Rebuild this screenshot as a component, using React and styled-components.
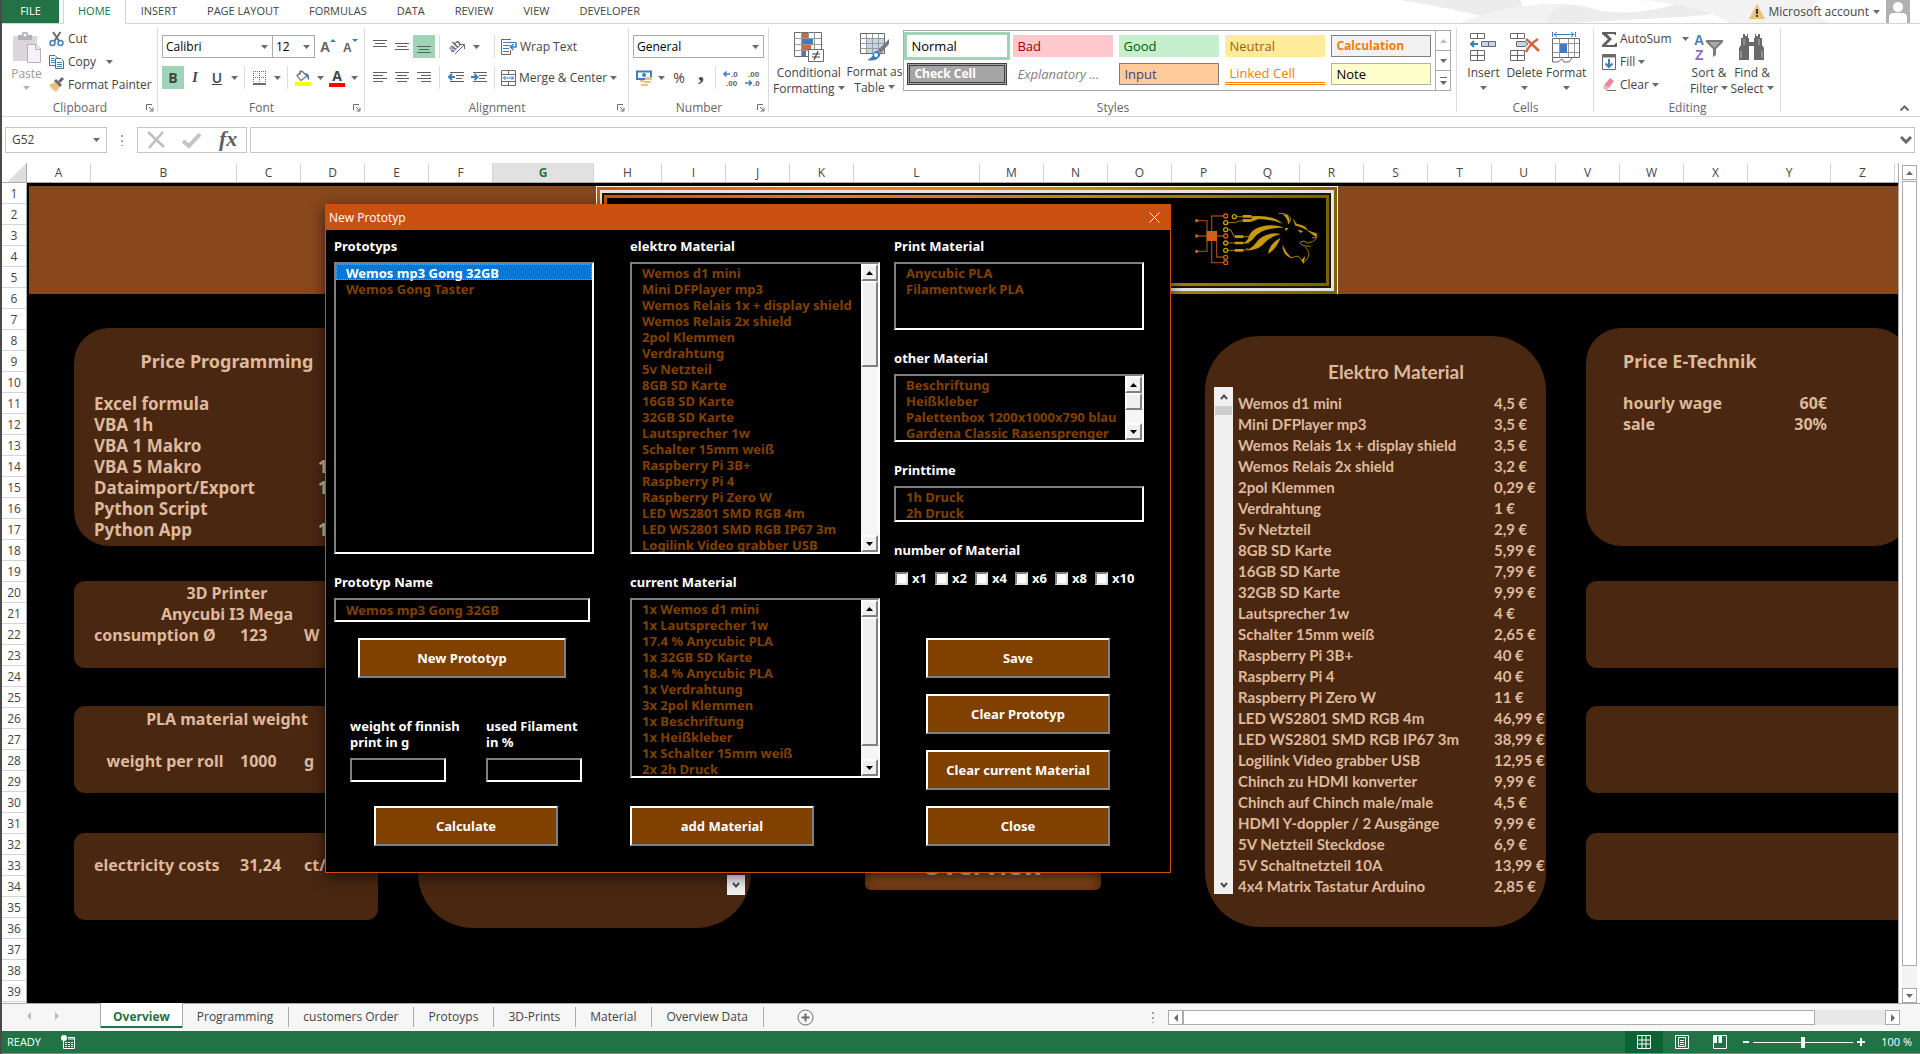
import React from "react";
import styled, { createGlobalStyle, css } from "styled-components";

const green = "#217346";
const ui = `"Open Sans", "Noto Sans", sans-serif`;
const dialogFont = `"Noto Sans", "Open Sans", sans-serif`;

const tabs = ["INSERT", "PAGE LAYOUT", "FORMULAS", "DATA", "REVIEW", "VIEW", "DEVELOPER"];

const columns = [
  ["A", 64], ["B", 146], ["C", 64], ["D", 64], ["E", 64], ["F", 64], ["G", 101],
  ["H", 68], ["I", 64], ["J", 64], ["K", 64], ["L", 126], ["M", 64], ["N", 64],
  ["O", 64], ["P", 64], ["Q", 64], ["R", 64], ["S", 64], ["T", 64], ["U", 64],
  ["V", 64], ["W", 64], ["X", 64], ["Y", 83], ["Z", 64],
];
const rows = Array.from({ length: 39 }, (_, i) => i + 1);

const cellStyles = [
  ["Normal", "normal"], ["Bad", "bad"], ["Good", "good"], ["Neutral", "neutral"], ["Calculation", "calculation"],
  ["Check Cell", "check"], ["Explanatory ...", "explanatory"], ["Input", "input"], ["Linked Cell", "linked"], ["Note", "note"],
];

const materials = [
  ["Wemos d1 mini", "4,5 €"],
  ["Mini DFPlayer mp3", "3,5 €"],
  ["Wemos Relais 1x + display shield", "3,5 €"],
  ["Wemos Relais 2x shield", "3,2 €"],
  ["2pol Klemmen", "0,29 €"],
  ["Verdrahtung", "1 €"],
  ["5v Netzteil", "2,9 €"],
  ["8GB SD Karte", "5,99 €"],
  ["16GB SD Karte", "7,99 €"],
  ["32GB SD Karte", "9,99 €"],
  ["Lautsprecher 1w", "4 €"],
  ["Schalter 15mm weiß", "2,65 €"],
  ["Raspberry Pi 3B+", "40 €"],
  ["Raspberry Pi 4", "40 €"],
  ["Raspberry Pi Zero W", "11 €"],
  ["LED WS2801 SMD RGB 4m", "46,99 €"],
  ["LED WS2801 SMD RGB IP67 3m", "38,99 €"],
  ["Logilink Video grabber USB", "12,95 €"],
  ["Chinch zu HDMI konverter", "9,99 €"],
  ["Chinch auf Chinch male/male", "4,5 €"],
  ["HDMI Y-doppler / 2 Ausgänge", "9,99 €"],
  ["5V Netzteil Steckdose", "6,9 €"],
  ["5V Schaltnetzteil 10A", "13,99 €"],
  ["4x4 Matrix Tastatur Arduino", "2,85 €"],
];

const programming = [
  ["Excel formula", ""],
  ["VBA 1h", ""],
  ["VBA 1 Makro", ""],
  ["VBA 5 Makro", "1"],
  ["Dataimport/Export", "1"],
  ["Python Script", ""],
  ["Python App", "1"],
];

const currentMaterial = [
  "1x Wemos d1 mini",
  "1x Lautsprecher 1w",
  "17.4 % Anycubic PLA",
  "1x 32GB SD Karte",
  "18.4 % Anycubic PLA",
  "1x Verdrahtung",
  "3x 2pol Klemmen",
  "1x Beschriftung",
  "1x Heißkleber",
  "1x Schalter 15mm weiß",
  "2x 2h Druck",
];

const sheets = ["Programming", "customers Order", "Protoyps", "3D-Prints", "Material", "Overview Data"];

/* ---------- icons ---------- */

const Caret = ({ color = "#6a6a6a" }) => (
  <svg viewBox="0 0 7 4" width="7" height="4" aria-hidden="true">
    <path d="M0 0H7L3.500 4Z" fill={color} />
  </svg>
);

const Launcher = () => (
  <svg width="8" height="8" viewBox="0 0 8 8" fill="none" stroke="#6a6a6a">
    <path d="M.5 6V.5H6M3 3L6.500 6.500M7 3.500V7H3.500" />
  </svg>
);

const PasteIcon = () => (
  <svg width="30" height="32" viewBox="0 0 30 32">
    <path d="M1 4H25V29H1Z" fill="#dcd6dc" />
    <path d="M6 3H10V1Q10 0 13 0T16 1V3H20V8H6Z" fill="#b4b0b4" />
    <circle cx="13" cy="3" r="1.500" fill="#fff" />
    <path d="M15.500 12.500H24L28.500 17V30.500H15.500Z" fill="#f6f1f8" stroke="#b4b0b4" />
    <path d="M23.500 12.500V17.500H28.500" fill="none" stroke="#b4b0b4" />
  </svg>
);

const CutIcon = () => (
  <svg width="16" height="16" viewBox="0 0 16 16" fill="none">
    <path d="M4 1L10.500 10.500M11.500 1L5 10.500" stroke="#6a6a6a" strokeWidth="2" />
    <circle cx="3.500" cy="12" r="2.500" stroke="#4a80b8" strokeWidth="1.500" />
    <circle cx="11.500" cy="12" r="2.500" stroke="#4a80b8" strokeWidth="1.500" />
  </svg>
);

const CopyIcon = () => (
  <svg width="16" height="16" viewBox="0 0 16 16" fill="#fff" stroke="#6a6a6a">
    <path d="M.5 1.500H6L8.500 4V11.500H.5Z" />
    <path d="M2 4.500H5M2 6.500H6M2 8.500H6" stroke="#4a80b8" />
    <path d="M6.500 4.500H12L14.500 7V14.500H6.500Z" />
    <path d="M8 8.500H13M8 10.500H13M8 12.500H13" stroke="#4a80b8" />
  </svg>
);

const PainterIcon = () => (
  <svg width="16" height="16" viewBox="0 0 16 16">
    <path d="M0 8L6 5L11 10L7 15Q3 13 0 8Z" fill="#ecc17c" />
    <path d="M5 4L7 2L13 8L11 10Z" fill="#6a6a6a" />
    <path d="M10 5L14 1" stroke="#6a6a6a" strokeWidth="3" />
  </svg>
);

const lineIcon = (lines) => () => (
  <svg width="14" height="13" viewBox="0 0 14 13" stroke="#5f5f5f">
    {lines.map(([x1, x2, y]) => (
      <path key={y} d={`M${x1} ${y}.500H${x2}`} />
    ))}
  </svg>
);
const TopAlign = lineIcon([[0, 14, 0], [2, 12, 3], [0, 14, 6]]);
const MiddleAlign = lineIcon([[0, 14, 3], [2, 12, 6], [0, 14, 9]]);
const BottomAlign = lineIcon([[0, 14, 6], [2, 12, 9], [0, 14, 12]]);
const LeftAlign = lineIcon([[0, 14, 1], [0, 10, 4], [0, 14, 7], [0, 10, 10]]);
const CenterAlign = lineIcon([[0, 14, 1], [2, 12, 4], [0, 14, 7], [2, 12, 10]]);
const RightAlign = lineIcon([[0, 14, 1], [4, 14, 4], [0, 14, 7], [4, 14, 10]]);

const IndentIcon = ({ flip }) => (
  <svg width="16" height="13" viewBox="0 0 16 13" fill="none" stroke="#5f5f5f">
    <path d="M2 1.500H16M8 4.500H16M8 7.500H14M2 10.500H16" />
    <path d={flip ? "M0 6H6M3.500 3L6.500 6L3.500 9" : "M1 6H7M4 3L1 6L4 9"} stroke="#3f7cba" strokeWidth="2" />
  </svg>
);

const OrientationIcon = () => (
  <svg width="20" height="20" viewBox="0 0 20 20" fill="none" stroke="#6a6a6a">
    <text x="1" y="13" transform="rotate(-45 7 9)" fontFamily="Liberation Sans" fontSize="11" fontWeight="700" fill="#6a6a6a" stroke="none">ab</text>
    <path d="M8 17L17 8M13 7.500H17.500V12" />
  </svg>
);

const WrapIcon = () => (
  <svg width="16" height="16" viewBox="0 0 16 16" fill="none" stroke="#6a6a6a">
    <path d="M0.500 0V15.500H9.500V11M0 .5H10" />
    <path d="M2 3.500H14M2 6.500H9M2 9.500H8M2 12.500H8" stroke="#3f7cba" />
    <path d="M15 3V8H10M12.500 5L9.500 8L12.500 11" stroke="#3f7cba" strokeWidth="1.500" />
  </svg>
);

const MergeIcon = () => (
  <svg width="15" height="16" viewBox="0 0 15 16" fill="none" stroke="#6a6a6a">
    <path d="M.5 .5H14.500V15.500H.5ZM.5 4.500H14.500M.5 11.500H14.500M7.500 0V4M7.500 12V16" />
    <path d="M2 8H13M4.500 6L2.500 8L4.500 10M10.500 6L12.500 8L10.500 10" stroke="#3f7cba" />
  </svg>
);

const BorderIcon = () => (
  <svg width="14" height="14" viewBox="0 0 14 14" fill="none" stroke="#6a6a6a">
    <path d="M.5 0V12M12.500 0V12M6.500 0V12M0 .5H13M0 6.500H13" strokeDasharray="1 1" />
    <path d="M0 13H13" strokeWidth="2" />
  </svg>
);

const FillIcon = () => (
  <svg width="18" height="17" viewBox="0 0 18 17">
    <path d="M6 1.500V6M3 6.500L8 2L13 7L7 11.500Z" fill="#fff" stroke="#6a6a6a" strokeWidth="1.200" />
    <path d="M11 4Q16 4 15 11Q13 10 13 7Z" fill="#3f7cba" />
    <path d="M1 13H17V17H1Z" fill="#ffff00" />
  </svg>
);

const GrowIcon = ({ small }) => (
  <svg width="17" height="20" viewBox="0 0 17 20">
    <text x="0" y="15" fontFamily="Liberation Sans" fontWeight="700" fontSize={small ? 12 : 14} fill="#5f5f5f">A</text>
    <path d={small ? "M9 2H15L12 5Z" : "M10 5H16L13 2Z"} fill="#3f7cba" />
  </svg>
);

const MoneyIcon = () => (
  <svg width="17" height="18" viewBox="0 0 17 18">
    <path d="M1 2.500H15V10H1Z" fill="#fff" stroke="#3f7cba" strokeWidth="2" />
    <circle cx="8" cy="6" r="2" fill="#3f7cba" />
    <path d="M9 8H16V11H9ZM8 12H15V14H8ZM4 11H8V13H4ZM5 15H12V17H5Z" fill="#ecc17c" />
  </svg>
);

const DecimalIcon = ({ flip }) => (
  <svg width="18" height="20" viewBox="0 0 18 20" fontFamily="Liberation Sans" fontSize="8" fontWeight="700" fill="#5f5f5f">
    <text x={flip ? 4 : 9} y="9">{flip ? ".00" : ".0"}</text>
    <text x={flip ? 9 : 4} y="18">{flip ? ".0" : ".00"}</text>
    <path d={flip ? "M1 15H7M5 12.500L7.500 15L5 17.500" : "M2 6H8M4.500 3.500L2 6L4.500 8.500"} fill="none" stroke="#3f7cba" strokeWidth="1.500" />
  </svg>
);

const ConditionalIcon = () => (
  <svg width="30" height="31" viewBox="0 0 30 31">
    <path d="M.5 .5H27.500V24.500H.5Z" fill="#fff" stroke="#6a6a6a" />
    <path d="M.5 6.500H27M.5 12.500H27M.5 18.500H27M7.500 0V24M14.500 0V24M20.500 0V24" stroke="#9a9a9a" />
    <path d="M8 1H14V6H8ZM8 13H17V18H8Z" fill="#d9613c" />
    <path d="M8 7H19V12H8ZM8 19H12V24H8Z" fill="#3f7cba" />
    <path d="M14.500 17.500H29.500V29.500H14.500Z" fill="#fff" stroke="#6a6a6a" />
    <path d="M18 22H26M18 25H26M24 19L20 28" stroke="#444" strokeWidth="1.200" />
  </svg>
);

const TableIcon = () => (
  <svg width="30" height="30" viewBox="0 0 30 30">
    <path d="M.5 1.500H24.500V21.500H.5Z" fill="#fff" stroke="#6a6a6a" />
    <path d="M7 7H24V21H7Z" fill="#c2d5ea" />
    <path d="M.5 6.500H24M.5 11.500H24M.5 16.500H24M6.500 2V21M12.500 2V21M18.500 2V21" stroke="#9a9a9a" />
    <path d="M29 7V12L21 21L18 18Z" fill="#7a7a7a" />
    <path d="M18 19Q21 21 20 24Q16 30 7 28Q12 26 13 22Q15 18 18 19Z" fill="#3f7cba" />
    <circle cx="16" cy="23" r="2" fill="#fff" />
  </svg>
);

const InsertIcon = () => (
  <svg width="27" height="31" viewBox="0 0 27 31" fill="#fff" stroke="#6a6a6a">
    <path d="M.5 1.500H14.500V6.500H.5ZM7.500 1.500V6.500M.5 18.500H14.500V28.500H.5ZM7.500 18.500V28.500M.5 23.500H14.500" />
    <path d="M11.500 9.500H25.500V14.500H11.500ZM18.500 9.500V14.500" fill="#c2d5ea" />
    <path d="M8 12H1M4 9L1 12L4 15" fill="none" stroke="#3f7cba" strokeWidth="2" />
  </svg>
);

const DeleteIcon = () => (
  <svg width="30" height="31" viewBox="0 0 30 31" fill="#fff" stroke="#6a6a6a">
    <path d="M.5 1.500H14.500V6.500H.5ZM7.500 1.500V6.500M.5 18.500H14.500V28.500H.5ZM7.500 18.500V28.500M.5 23.500H14.500" />
    <path d="M6.500 9.500H15L18 12L15 14.500H6.500Z" fill="#c2d5ea" />
    <path d="M16 7Q22 12 29 19M28 7Q20 12 16 20" fill="none" stroke="#d9613c" strokeWidth="2.500" />
  </svg>
);

const FormatIcon = () => (
  <svg width="29" height="31" viewBox="0 0 29 31" fill="#fff" stroke="#6a6a6a">
    <path d="M.5 0V5M23.500 0V5M2 2.500H22M5 0L2 2.500L5 5M19 0L22 2.500L19 5" fill="none" stroke="#3f7cba" />
    <path d="M.5 6.500H27.500V25.500H.5Z" />
    <path d="M.5 11.500H27M.5 20.500H27M7.500 7V25M16.500 7V25M22.500 7V25" stroke="#9a9a9a" />
    <path d="M8 12H15V21H8Z" fill="#3f7cba" stroke="none" />
    <path d="M.5 26V30H6L10 27L12 30H17L20 26" />
  </svg>
);

const SumIcon = () => (
  <svg width="15" height="15" viewBox="0 0 15 15">
    <path d="M0 0H14V3H13L12 2H5L10 7L4 13H12L14 11H15V15H0V13L6 7L0 2Z" fill="#5f5f5f" />
  </svg>
);

const FillDownIcon = () => (
  <svg width="15" height="16" viewBox="0 0 15 16" fill="none" stroke="#6a6a6a">
    <path d="M.5 .5H13.500V15.500H.5Z" fill="#fff" />
    <path d="M1 2H13" strokeWidth="3" />
    <path d="M7 5V13M3.500 9.500L7 13L10.500 9.500" stroke="#3f7cba" strokeWidth="2" />
  </svg>
);

const ClearIcon = () => (
  <svg width="15" height="14" viewBox="0 0 15 14">
    <path d="M8 0L12 3L7 10L2 7Z" fill="#e8889c" />
    <path d="M2 7L7 10L5 12H3L1 10Z" fill="#f3b6c1" />
    <path d="M5 12.500H14" stroke="#6a6a6a" />
  </svg>
);

const SortIcon = () => (
  <svg width="30" height="31" viewBox="0 0 30 31" fontFamily="Liberation Sans" fontSize="14" fontWeight="700">
    <text x="0" y="13" fill="#4a80b8">A</text>
    <text x="1" y="28" fill="#9467bd">Z</text>
    <path d="M12 8H29V10L22 17V23L19 25V17L12 10Z" fill="#7a7a7a" />
    <path d="M15 10H26L20.500 16Z" fill="#a8a8a8" />
  </svg>
);

const FindIcon = () => (
  <svg width="28" height="31" viewBox="0 0 28 31" fill="#6a6a6a">
    <path d="M5 2H7V4H9V2H10V6H11V10H16V6H17V2H18V4H20V2H22V6H24V13L26 16V28H16V14H11V28H1V16L3 13V6H5Z" />
    <path d="M6 7V13M21 7V13M3 19V26M24 19V26" stroke="#b8b8b8" />
  </svg>
);

const Lion = () => (
  <svg width="125" height="53" viewBox="42 75 375 159" fill="none">
    <g stroke="#8a4314" strokeWidth="4">
      <path d="M50 101H81V193H50M50 147H81M95 133V87H130M111 147H130M110 160V210H130M95 160V227H130" />
    </g>
    <g fill="#d06018">
      <path d="M80 132H111V162H80Z" />
      <circle cx="50" cy="101" r="5" />
      <circle cx="50" cy="147" r="5" />
      <circle cx="50" cy="193" r="5" />
    </g>
    <g stroke="#d06018" strokeWidth="4">
      <circle cx="137" cy="87" r="6" />
      <circle cx="137" cy="147" r="6" />
      <circle cx="137" cy="211" r="6" />
      <circle cx="137" cy="227" r="6" />
    </g>
    <g stroke="#c79a0a" strokeWidth="4">
      <circle cx="163" cy="89" r="6" />
      <circle cx="137" cy="107" r="6" />
      <circle cx="137" cy="128" r="6" />
      <circle cx="137" cy="168" r="6" />
      <circle cx="137" cy="190" r="6" />
    </g>
    <g stroke="#a67f08" strokeWidth="3">
      <path d="M170 89H188M144 107H166L176 102H188M144 128H152L162 149M144 168H164M144 190H164M190 149H208M190 168H208M190 190L205 184" />
      <path d="M340 97L346 110Q360 115 376 120L384 132L410 140V152L400 164M410 152L396 152M358 166L372 162L382 168L398 164M360 168Q364 178 392 178M376 180Q392 196 384 212L370 229M366 220L354 207L334 212M296 79Q322 78 331 92Q334 104 324 112" />
    </g>
    <g fill="#c79a0a">
      <path d="M188 84H214V92H188ZM188 96H214V105H188ZM164 145H190V153H164ZM164 164H190V172H164ZM164 186H190V194H164Z" />
      <path d="M214 88Q276 82 308 110Q270 96 236 96L214 104Z" />
      <path d="M206 150C214 122 262 104 312 122C270 122 242 130 224 150Q210 170 190 169Q204 160 206 150Z" />
      <path d="M196 190C222 184 226 164 246 150Q272 134 302 141C276 148 262 158 250 172Q230 192 196 190Z" />
      <path d="M302 152Q268 170 264 200Q286 190 302 152Z" />
      <path d="M306 82Q324 92 324 112Q334 98 322 84Z" />
      <path d="M308 172C306 194 318 210 338 214C320 200 314 188 308 172Z" />
      <path d="M340 97L350 112Q372 112 382 130Q362 118 346 116Z" />
      <path d="M352 128L370 132L362 138ZM314 124L326 122L318 132ZM384 132L410 140L408 150L396 142Z" />
      <path d="M364 220L376 206L370 231Z" />
    </g>
  </svg>
);

/* ---------- page ---------- */

const BigCommand = ({ icon, label, second, muted }) => (
  <BigButton $muted={muted}>
    {icon}
    <span>{label}</span>
    <span>
      {second} <Caret color={muted ? "#b4b4b4" : undefined} />
    </span>
  </BigButton>
);

const Group = ({ label, width, launcher, children }) => (
  <GroupBox $width={width}>
    {children}
    <GroupLabel>
      {label}
      {launcher && (
        <LauncherButton aria-label={`${label} settings`}>
          <Launcher />
        </LauncherButton>
      )}
    </GroupLabel>
  </GroupBox>
);

const ListBox = ({ id, label, items, height, selected, scroll }) => (
  <Field>
    <FieldLabel htmlFor={id}>{label}</FieldLabel>
    <ListFrame $height={height}>
      <List id={id} size={Math.max(2, items.length)} defaultValue={selected}>
        {items.map((item) => (
          <option key={item}>{item}</option>
        ))}
      </List>
      {scroll && (
        <ClassicScroll>
          <ClassicButton type="button" aria-label="Scroll up">
            <svg width="7" height="4" viewBox="0 0 7 4"><path d="M0 4H7L3.500 0Z" /></svg>
          </ClassicButton>
          <ClassicThumb $height={scroll} />
          <ClassicTrack />
          <ClassicButton type="button" aria-label="Scroll down">
            <svg width="7" height="4" viewBox="0 0 7 4"><path d="M0 0H7L3.500 4Z" /></svg>
          </ClassicButton>
        </ClassicScroll>
      )}
    </ListFrame>
  </Field>
);

const PrototypDialog = () => (
  <Dialog role="dialog" aria-label="New Prototyp">
    <TitleBar>
      New Prototyp
      <CloseButton aria-label="Close window">
        <svg width="11" height="11" viewBox="0 0 11 11" stroke="#fff"><path d="M.5 .5L10.500 10.500M10.500 .5L.5 10.500" /></svg>
      </CloseButton>
    </TitleBar>
    <DialogBody>
      <DialogColumn $width={260}>
        <ListBox id="prototyps" label="Prototyps" height={292} selected="Wemos mp3 Gong 32GB" items={["Wemos mp3 Gong 32GB", "Wemos Gong Taster"]} />
        <Field>
          <FieldLabel htmlFor="name">Prototyp Name</FieldLabel>
          <TextInput id="name" $width={256} defaultValue="Wemos mp3 Gong 32GB" />
        </Field>
        <FormButton $width={208} $left={24} $top={16}>New Prototyp</FormButton>
        <InputPair>
          <Field>
            <FieldLabel htmlFor="weight">weight of finnish<br />print in g</FieldLabel>
            <TextInput id="weight" $width={96} />
          </Field>
          <Field>
            <FieldLabel htmlFor="filament">used Filament<br />in %</FieldLabel>
            <TextInput id="filament" $width={96} />
          </Field>
        </InputPair>
        <FormButton $left={40} $top={24}>Calculate</FormButton>
      </DialogColumn>
      <DialogColumn $width={250} $left={36}>
        <ListBox id="elektro" label="elektro Material" height={292} scroll={86} items={materials.slice(0, 18).map((m) => m[0])} />
        <ListBox id="current" label="current Material" height={180} scroll={129} items={currentMaterial} />
        <FormButton $top={28}>add Material</FormButton>
      </DialogColumn>
      <DialogColumn $width={250} $left={14}>
        <ListBox id="print" label="Print Material" height={68} items={["Anycubic PLA", "Filamentwerk PLA"]} />
        <ListBox id="other" label="other Material" height={68} scroll={17} items={["Beschriftung", "Heißkleber", "Palettenbox 1200x1000x790 blau", "Gardena Classic Rasensprenger"]} />
        <ListBox id="time" label="Printtime" height={36} items={["1h Druck", "2h Druck"]} />
        <Field as="fieldset">
          <FieldLabel as="legend">number of Material</FieldLabel>
          <Checks>
            {["x1", "x2", "x4", "x6", "x8", "x10"].map((n) => (
              <CheckLabel key={n}>
                <Check type="checkbox" />
                {n}
              </CheckLabel>
            ))}
          </Checks>
        </Field>
        <FormButton $left={32} $top={52}>Save</FormButton>
        <FormButton $left={32} $top={16}>Clear Prototyp</FormButton>
        <FormButton $left={32} $top={16}>Clear current Material</FormButton>
        <FormButton $left={32} $top={16}>Close</FormButton>
      </DialogColumn>
    </DialogBody>
  </Dialog>
);

const Ribbon = () => (
  <RibbonBar>
    <Group label="Clipboard" width={156} launcher>
      <GroupContent>
        <BigCommand muted label="Paste" icon={<PasteIcon />} />
        <CommandStack>
          <Command><CutIcon /> Cut</Command>
          <Command><CopyIcon /> Copy <Spacer /><Caret /></Command>
          <Command><PainterIcon /> Format Painter</Command>
        </CommandStack>
      </GroupContent>
    </Group>
    <Group label="Font" width={207} launcher>
      <ToolRows>
        <ToolRow>
          <Combo $width={111}><select aria-label="Font"><option>Calibri</option></select><Caret /></Combo>
          <Combo $width={43} $joined><select aria-label="Font size"><option>12</option></select><Caret /></Combo>
          <Tool $width={26}><GrowIcon /></Tool>
          <Tool $width={20}><GrowIcon small /></Tool>
        </ToolRow>
        <ToolRow>
          <Tool $active><b>B</b></Tool>
          <Tool><em>I</em></Tool>
          <Tool><u>U</u></Tool>
          <Tool $width={12}><Caret /></Tool>
          <Divider />
          <Tool><BorderIcon /></Tool>
          <Tool $width={12}><Caret /></Tool>
          <Divider />
          <Tool><FillIcon /></Tool>
          <Tool $width={12}><Caret /></Tool>
          <Tool><FontColor>A</FontColor></Tool>
          <Tool $width={12}><Caret /></Tool>
        </ToolRow>
      </ToolRows>
    </Group>
    <Group label="Alignment" width={264} launcher>
      <ToolRows>
        <ToolRow>
          <Tool><TopAlign /></Tool>
          <Tool><MiddleAlign /></Tool>
          <Tool $active><BottomAlign /></Tool>
          <Divider />
          <Tool $width={26}><OrientationIcon /></Tool>
          <Tool $width={12}><Caret /></Tool>
          <Spacer $width={8} />
          <Divider />
          <Command><WrapIcon /> Wrap Text</Command>
        </ToolRow>
        <ToolRow>
          <Tool><LeftAlign /></Tool>
          <Tool><CenterAlign /></Tool>
          <Tool><RightAlign /></Tool>
          <Divider />
          <Tool $width={23}><IndentIcon /></Tool>
          <Tool $width={23}><IndentIcon flip /></Tool>
          <Divider />
          <Command><MergeIcon /> Merge &amp; Center <Caret /></Command>
        </ToolRow>
      </ToolRows>
    </Group>
    <Group label="Number" width={140} launcher>
      <ToolRows>
        <ToolRow>
          <Combo $width={131}><select aria-label="Number format"><option>General</option></select><Caret /></Combo>
        </ToolRow>
        <ToolRow>
          <Tool><MoneyIcon /></Tool>
          <Tool $width={12}><Caret /></Tool>
          <Tool $width={24}>%</Tool>
          <Tool $width={20}><Comma>,</Comma></Tool>
          <Divider />
          <Tool><DecimalIcon /></Tool>
          <Tool><DecimalIcon flip /></Tool>
        </ToolRow>
      </ToolRows>
    </Group>
    <Group label="Styles" width={688}>
      <GroupContent $left={3}>
        <BigCommand label="Conditional" second="Formatting" icon={<ConditionalIcon />} />
        <BigCommand label="Format as" second="Table" icon={<TableIcon />} />
        <Gallery>
          <GalleryGrid>
            {cellStyles.map(([name, kind]) => (
              <StyleCell key={kind} $kind={kind}>{name}</StyleCell>
            ))}
          </GalleryGrid>
          <GalleryScroll>
            <button aria-label="Previous row"><svg width="7" height="4" viewBox="0 0 7 4"><path d="M0 4H7L3.500 0Z" fill="#c0c0c0" /></svg></button>
            <button aria-label="Next row"><Caret /></button>
            <button aria-label="More styles"><svg width="7" height="8" viewBox="0 0 7 8"><path d="M0 0H7V1H0ZM0 4H7L3.500 8Z" fill="#6a6a6a" /></svg></button>
          </GalleryScroll>
        </Gallery>
      </GroupContent>
    </Group>
    <Group label="Cells" width={137}>
      <GroupContent $left={6}>
        <BigCommand label="Insert" icon={<InsertIcon />} />
        <BigCommand label="Delete" icon={<DeleteIcon />} />
        <BigCommand label="Format" icon={<FormatIcon />} />
      </GroupContent>
    </Group>
    <Group label="Editing" width={187}>
      <GroupContent $left={6}>
        <CommandStack>
          <Command><SumIcon /> AutoSum <Spacer /><Caret /></Command>
          <Command><FillDownIcon /> Fill <Caret /></Command>
          <Command><ClearIcon /> Clear <Caret /></Command>
        </CommandStack>
        <BigCommand label="Sort &amp;" second="Filter" icon={<SortIcon />} />
        <BigCommand label="Find &amp;" second="Select" icon={<FindIcon />} />
      </GroupContent>
    </Group>
    <CollapseButton aria-label="Collapse the ribbon">
      <svg width="9" height="6" viewBox="0 0 9 6" fill="none" stroke="#6a6a6a" strokeWidth="2"><path d="M.5 5.500L4.500 1.500L8.500 5.500" /></svg>
    </CollapseButton>
  </RibbonBar>
);

const App = () => (
  <Window>
    <GlobalStyle />
    <TabBar>
      <FileTab>FILE</FileTab>
      <RibbonTab $active>HOME</RibbonTab>
      {tabs.map((tab) => (
        <RibbonTab key={tab}>{tab}</RibbonTab>
      ))}
      <Account>
        <Swirls viewBox="0 0 520 23" preserveAspectRatio="none" aria-hidden="true">
          <path d="M0 0H120Q130 16 100 20Q50 8 0 0ZM90 23Q150 -4 190 8Q230 20 290 0H360Q330 16 260 18Q190 22 170 23Z" fill="#ececec" />
          <path d="M60 23Q110 2 170 4Q140 14 150 23ZM240 0H420Q400 10 430 23H330Q300 4 240 0Z" fill="#f2f2f2" />
        </Swirls>
        <AccountButton>
          <svg width="16" height="15" viewBox="0 0 16 15">
            <path d="M8 0L16 15H0Z" fill="#ecc17c" />
            <path d="M8 5V10M8 11V13" stroke="#3a3a3a" strokeWidth="2" />
          </svg>
          Microsoft account <Caret />
        </AccountButton>
        <svg width="24" height="23" viewBox="0 0 24 23">
          <path d="M0 0H24V23H0Z" fill="#b1b1b1" />
          <path d="M3 23V17Q3 13 8 13H16Q21 13 21 17V23Z" fill="#fff" />
          <circle cx="12" cy="7" r="5.500" fill="#fff" stroke="#b1b1b1" />
        </svg>
      </Account>
    </TabBar>
    <Ribbon />
    <FormulaBar>
      <NameBox>
        <input aria-label="Name box" defaultValue="G52" />
        <Caret />
      </NameBox>
      <Dots />
      <FormulaTools>
        <button aria-label="Cancel"><svg width="18" height="18" viewBox="0 0 18 18" stroke="#bdbdbd" strokeWidth="2.500"><path d="M1 1L17 16M16 1L2 17" /></svg></button>
        <button aria-label="Enter"><svg width="20" height="17" viewBox="0 0 20 17" fill="none" stroke="#c4c4c4" strokeWidth="4"><path d="M1 9L7 14L18 2" /></svg></button>
        <button><i>fx</i></button>
      </FormulaTools>
      <FormulaInput>
        <input aria-label="Formula" />
        <svg width="12" height="8" viewBox="0 0 12 8" fill="none" stroke="#6a6a6a" strokeWidth="3"><path d="M1 1L6 6L11 1" /></svg>
      </FormulaInput>
    </FormulaBar>

    <Workbook>
      <SheetArea>
        <ColumnHeads>
          <Corner />
          {columns.map(([name, width]) => (
            <ColumnHead key={name} $width={width} $active={name === "G"}>{name}</ColumnHead>
          ))}
        </ColumnHeads>
        <SheetRow>
          <RowHeads>
            {rows.map((row) => (
              <RowHead key={row}>{row}</RowHead>
            ))}
          </RowHeads>
          <Canvas>
            <Banner>
              <LogoFrame>
                <LogoLine>
                  <LogoInner>
                    <LogoCore><Lion /></LogoCore>
                  </LogoInner>
                </LogoLine>
              </LogoFrame>
            </Banner>
            <Board>
              <PanelColumn $left={47} $top={34} $width={304}>
                <Panel $height={218} $radius={35} $pad={23} $large>
                  <PanelTitle>Price Programming</PanelTitle>
                  <PanelGap />
                  {programming.map(([name, price]) => (
                    <CostRow key={name} $wide>
                      <span>{name}</span>
                      <span>{price}</span>
                    </CostRow>
                  ))}
                </Panel>
                <Panel $height={87} $gap={35} $pad={2}>
                  <PanelTitle $small>3D Printer</PanelTitle>
                  <PanelTitle $small>Anycubi I3 Mega</PanelTitle>
                  <CostRow><span>consumption Ø</span><span>123</span><span>W</span></CostRow>
                </Panel>
                <Panel $height={87} $gap={38} $pad={3}>
                  <PanelTitle $small>PLA material weight</PanelTitle>
                  <PanelGap />
                  <CostRow $center><span>weight per roll</span><span>1000</span><span>g</span></CostRow>
                </Panel>
                <Panel $height={87} $gap={40} $pad={22}>
                  <CostRow><span>electricity costs</span><span>31,24</span><span>ct/</span></CostRow>
                </Panel>
              </PanelColumn>

              <PanelColumn $left={40} $top={42} $width={333}>
                <ListPanel $height={592} $end>
                  <DownButton aria-label="Scroll down">
                    <svg width="8" height="6" viewBox="0 0 8 6" fill="none" stroke="#505050" strokeWidth="2"><path d="M1 1L4 4.500L7 1" /></svg>
                  </DownButton>
                </ListPanel>
              </PanelColumn>

              <PanelColumn $left={114} $top={546} $width={236}>
                <OverviewButton>Overview</OverviewButton>
              </PanelColumn>

              <PanelColumn $left={104} $top={42} $width={341}>
                <ListPanel $height={591}>
                  <ListTitle>Elektro Material</ListTitle>
                  <ListBody>
                    <SheetScroll>
                      <button aria-label="Scroll up"><svg width="8" height="6" viewBox="0 0 8 6" fill="none" stroke="#505050" strokeWidth="2"><path d="M1 5L4 1.500L7 5" /></svg></button>
                      <SheetThumb />
                      <button aria-label="Scroll down"><svg width="8" height="6" viewBox="0 0 8 6" fill="none" stroke="#505050" strokeWidth="2"><path d="M1 1L4 4.500L7 1" /></svg></button>
                    </SheetScroll>
                    <MaterialTable>
                      <tbody>
                        {materials.map(([name, price]) => (
                          <tr key={name}>
                            <td>{name}</td>
                            <td>{price}</td>
                          </tr>
                        ))}
                      </tbody>
                    </MaterialTable>
                  </ListBody>
                </ListPanel>
              </PanelColumn>

              <PanelColumn $left={40} $top={34} $width={324}>
                <Panel $height={218} $radius={35} $pad={23} $inset={33}>
                  <PanelTitle $start>Price E-Technik</PanelTitle>
                  <PanelGap />
                  <WageRow><span>hourly wage</span><span>60€</span></WageRow>
                  <WageRow><span>sale</span><span>30%</span></WageRow>
                </Panel>
                <Panel $height={87} $gap={35} />
                <Panel $height={87} $gap={38} />
                <Panel $height={87} $gap={40} />
              </PanelColumn>
            </Board>
          </Canvas>
        </SheetRow>
      </SheetArea>
      <VerticalScroll>
        <button aria-label="Scroll up"><svg width="7" height="4" viewBox="0 0 7 4"><path d="M0 4H7L3.500 0Z" fill="#6a6a6a" /></svg></button>
        <VerticalThumb />
        <button aria-label="Scroll down"><Caret /></button>
      </VerticalScroll>
    </Workbook>

    <SheetTabs>
      <TabArrows>
        <svg width="4" height="8" viewBox="0 0 4 8"><path d="M4 0V8L0 4Z" fill="#bcbcbc" /></svg>
        <svg width="4" height="8" viewBox="0 0 4 8"><path d="M0 0V8L4 4Z" fill="#bcbcbc" /></svg>
      </TabArrows>
      <SheetTab $active>Overview</SheetTab>
      {sheets.map((sheet) => (
        <SheetTab key={sheet}>{sheet}</SheetTab>
      ))}
      <AddSheet aria-label="New sheet">
        <svg width="17" height="17" viewBox="0 0 17 17" fill="none" stroke="#6a6a6a">
          <circle cx="8.500" cy="8.500" r="7.500" />
          <path d="M8.500 4.500V12.500M4.500 8.500H12.500" strokeWidth="2" />
        </svg>
      </AddSheet>
      <HorizontalScroll>
        <Dots />
        <button aria-label="Scroll left"><svg width="4" height="8" viewBox="0 0 4 8"><path d="M4 0V8L0 4Z" fill="#6a6a6a" /></svg></button>
        <HorizontalThumb />
        <HorizontalTrack />
        <button aria-label="Scroll right"><svg width="4" height="8" viewBox="0 0 4 8"><path d="M0 0V8L4 4Z" fill="#6a6a6a" /></svg></button>
      </HorizontalScroll>
    </SheetTabs>

    <StatusBar>
      READY
      <svg width="15" height="14" viewBox="0 0 15 14" fill="none" stroke="#fff">
        <circle cx="3" cy="3" r="3" fill="#fff" stroke="none" />
        <path d="M2.500 6V13.500H13.500V2.500H7M7 4H13" />
        <path d="M4 7.500H12M4 9.500H12M4 11.500H12" strokeDasharray="2 1" />
      </svg>
      <StatusTools>
        <ViewButton $active aria-label="Normal view">
          <svg width="14" height="14" viewBox="0 0 14 14" fill="none" stroke="#fff"><path d="M.5 .5H13.500V13.500H.5ZM.5 5H13.500M.5 9H13.500M5 .5V13.500M9 .5V13.500" /></svg>
        </ViewButton>
        <ViewButton aria-label="Page layout view">
          <svg width="14" height="14" viewBox="0 0 14 14" fill="none" stroke="#fff"><path d="M.5 .5H13.500V13.500H.5ZM3.500 2.500H10.500V11.500H3.500ZM5 5.500H9M5 7.500H9M5 9.500H9" /></svg>
        </ViewButton>
        <ViewButton aria-label="Page break view">
          <svg width="14" height="14" viewBox="0 0 14 14" fill="none" stroke="#fff"><path d="M.5 .5H13.500V13.500H.5Z" /><path d="M1 1H4V8H1ZM5.500 1H9V8H5.500Z" fill="#fff" stroke="none" /></svg>
        </ViewButton>
        <ZoomButton aria-label="Zoom out"><svg width="6" height="8" viewBox="0 0 6 8"><path d="M0 3H6V5H0Z" fill="#fff" /></svg></ZoomButton>
        <ZoomSlider type="range" aria-label="Zoom" min="0" max="200" defaultValue="100" />
        <ZoomButton aria-label="Zoom in"><svg width="8" height="8" viewBox="0 0 8 8"><path d="M3 0H5V3H8V5H5V8H3V5H0V3H3Z" fill="#fff" /></svg></ZoomButton>
        <ZoomValue>100 %</ZoomValue>
      </StatusTools>
    </StatusBar>
    <PrototypDialog />
  </Window>
);

const GlobalStyle = createGlobalStyle`
  * {
    box-sizing: border-box;
  }
  body {
    margin: 0;
    background: #fff;
  }
  button, input, select {
    margin: 0;
    padding: 0;
    border: 0;
    background: none;
    color: inherit;
    font: inherit;
    appearance: none;
    outline: none;
  }
  svg {
    display: block;
    flex: none;
  }
`;

const Window = styled.main`
  position: relative;
  display: flex;
  flex-direction: column;
  height: 100vh;
  min-height: 960px;
  overflow: hidden;
  border-left: 2px solid #4a4a4a;
  background: #fff;
  color: #444;
  font-family: ${ui};
  font-size: 12px;
  line-height: 16px;
`;
const Spacer = styled.span`
  width: ${({ $width }) => $width || 4}px;
`;

const TabBar = styled.nav`
  display: flex;
  flex: none;
  height: 24px;
  border-bottom: 1px solid #d4d4d4;
`;
const RibbonTab = styled.button`
  height: 24px;
  padding: 0 14px 2px;
  border: solid transparent;
  border-width: 0 1px;
  font-size: 11px;
  white-space: nowrap;
  ${({ $active }) =>
    $active &&
    css`
      border-color: #d4d4d4;
      background: #fff;
      color: ${green};
    `}
`;
const FileTab = styled(RibbonTab)`
  width: 57px;
  height: 23px;
  margin-right: 4px;
  background: ${green};
  color: #fff;
`;
const Account = styled.div`
  position: relative;
  display: flex;
  justify-content: flex-end;
  width: 520px;
  margin-left: auto;
  padding-right: 10px;
`;
const Swirls = styled.svg`
  position: absolute;
  inset: 0;
  width: 100%;
  height: 23px;
`;
const AccountButton = styled.button`
  position: relative;
  display: flex;
  align-items: center;
  gap: 4px;
  margin-right: 6px;
`;

const RibbonBar = styled.section`
  display: flex;
  flex: none;
  height: 93px;
  border-bottom: 1px solid #d4d4d4;
`;
const GroupBox = styled.div`
  position: relative;
  display: flex;
  flex: none;
  flex-direction: column;
  justify-content: space-between;
  width: ${({ $width }) => $width}px;
  margin-top: 4px;
  background: linear-gradient(#dcdcdc, #dcdcdc) right top / 1px 84px no-repeat;
`;
const GroupLabel = styled.div`
  height: 16px;
  color: #666;
  text-align: center;
`;
const LauncherButton = styled.button`
  position: absolute;
  right: 4px;
  bottom: 4px;
  display: flex;
`;
const GroupContent = styled.div`
  display: flex;
  height: 68px;
  padding-left: ${({ $left }) => $left || 4}px;
`;
const BigButton = styled.button`
  display: flex;
  flex-direction: column;
  align-items: center;
  min-width: 41px;
  padding: 4px 1px 0;
  color: ${({ $muted }) => ($muted ? "#9a9a9a" : "#444")};
  white-space: nowrap;
  svg:first-child {
    margin-bottom: 2px;
  }
  span {
    display: flex;
    align-items: center;
    gap: 3px;
    height: 16px;
  }
`;
const CommandStack = styled.div`
  display: flex;
  flex-direction: column;
`;
const Command = styled.button`
  display: flex;
  align-items: center;
  gap: 3px;
  height: 23px;
  padding-left: 2px;
  white-space: nowrap;
`;
const ToolRows = styled.div`
  display: flex;
  flex-direction: column;
  gap: 8px;
  padding: 7px 0 0 4px;
`;
const ToolRow = styled.div`
  display: flex;
  height: 23px;
`;
const Combo = styled.label`
  display: flex;
  align-items: center;
  justify-content: space-between;
  width: ${({ $width }) => $width}px;
  margin-left: ${({ $joined }) => ($joined ? -1 : 0)}px;
  padding: 0 4px 0 3px;
  border: 1px solid #ababab;
  color: #000;
  select {
    flex: 1;
    min-width: 0;
  }
`;
const Tool = styled.button`
  display: flex;
  align-items: center;
  justify-content: center;
  width: ${({ $width }) => $width || 22}px;
  background: ${({ $active }) => ($active ? "#9fd5b7" : "none")};
  font-size: 14px;
  em {
    font-family: "Liberation Serif", serif;
    font-weight: 700;
  }
  u {
    font-weight: 600;
  }
`;
const Comma = styled.b`
  height: 28px;
  font-family: "Liberation Serif", serif;
  font-size: 24px;
`;
const FontColor = styled.span`
  width: 16px;
  height: 18px;
  border-bottom: 4px solid #f00;
  font-weight: 700;
  line-height: 14px;
`;
const Divider = styled.span`
  width: 1px;
  margin: 0 4px;
  background: #dcdcdc;
`;
const Gallery = styled.div`
  display: flex;
  width: 548px;
  height: 61px;
  margin-top: 2px;
  border: 1px solid #ababab;
`;
const GalleryGrid = styled.div`
  display: grid;
  flex: 1;
  grid-template-columns: repeat(5, 100px);
  grid-auto-rows: 22px;
  gap: 6px;
  padding: 4px 3px;
`;
const kinds = {
  normal: "color: #000; background: #fff; outline: 3px solid #9fd5b7;",
  bad: "color: #9c0006; background: #ffc7ce;",
  good: "color: #006100; background: #c6efce;",
  neutral: "color: #9c6500; background: #ffeb9c;",
  calculation: "color: #fa7d00; background: #f2f2f2; border: 1px solid #7f7f7f; font-size: 12px; font-weight: 700;",
  check: "color: #fff; background: #a5a5a5; border: 3px double #3f3f3f; font-size: 12px; font-weight: 700;",
  explanatory: "color: #7f7f7f; font-style: italic;",
  input: "color: #3f3f76; background: #ffcc99; border: 1px solid #7f7f7f;",
  linked: "color: #fa7d00; border-bottom: 3px double #ff8001;",
  note: "color: #000; background: #ffffcc; border: 1px solid #b2b2b2;",
};
const StyleCell = styled.button`
  display: flex;
  align-items: center;
  padding: 0 4px;
  font-size: 13px;
  white-space: nowrap;
  ${({ $kind }) => kinds[$kind]}
`;
const GalleryScroll = styled.div`
  display: flex;
  flex-direction: column;
  width: 15px;
  border-left: 1px solid #ababab;
  button {
    display: flex;
    flex: 1;
    align-items: center;
    justify-content: center;
  }
  button + button {
    border-top: 1px solid #ababab;
  }
`;
const CollapseButton = styled.button`
  align-self: flex-end;
  margin: 0 11px 5px auto;
`;

const FormulaBar = styled.section`
  display: flex;
  flex: none;
  height: 46px;
  padding: 10px 5px 10px 3px;
`;
const NameBox = styled.div`
  display: flex;
  align-items: center;
  width: 102px;
  padding: 0 6px;
  border: 1px solid #c6c6c6;
  input {
    flex: 1;
    min-width: 0;
  }
`;
const Dots = styled.span`
  align-self: center;
  width: 2px;
  height: 11px;
  margin: 0 14px;
  background: repeating-linear-gradient(#a0a0a0 0 2px, transparent 2px 5px);
`;
const FormulaTools = styled.div`
  display: flex;
  align-items: center;
  justify-content: space-around;
  width: 110px;
  margin-right: 3px;
  border: 1px solid #c6c6c6;
  i {
    color: #5f5f5f;
    font-family: "Liberation Serif", serif;
    font-size: 22px;
    font-weight: 700;
  }
`;
const FormulaInput = styled.div`
  display: flex;
  flex: 1;
  align-items: center;
  padding-right: 2px;
  border: 1px solid #c6c6c6;
  input {
    flex: 1;
  }
`;

const Workbook = styled.section`
  display: flex;
  flex: 1;
  min-height: 0;
`;
const SheetArea = styled.div`
  display: flex;
  flex: 1;
  flex-direction: column;
  min-width: 0;
  overflow: hidden;
  border-right: 1px solid #ababab;
`;
const ColumnHeads = styled.div`
  display: flex;
  flex: none;
  height: 20px;
  border-bottom: 1px solid #ababab;
`;
const Corner = styled.div`
  flex: none;
  width: 25px;
  border-right: 1px solid #ababab;
  background: linear-gradient(135deg, transparent 58%, #dedede 58%);
`;
const ColumnHead = styled.div`
  flex: none;
  width: ${({ $width }) => $width}px;
  padding-top: 2px;
  border-right: 1px solid #d4d4d4;
  text-align: center;
  ${({ $active }) =>
    $active &&
    css`
      background: #e1e1e1;
      color: ${green};
      font-weight: 700;
    `}
`;
const SheetRow = styled.div`
  display: flex;
  flex: 1;
  min-height: 0;
`;
const RowHeads = styled.div`
  flex: none;
  width: 25px;
  overflow: hidden;
  border-right: 1px solid #ababab;
`;
const RowHead = styled.div`
  height: 21px;
  padding-top: 3px;
  border-bottom: 1px solid #d4d4d4;
  text-align: center;
`;
const Canvas = styled.div`
  flex: 1;
  min-width: 0;
  overflow: hidden;
  background: #000;
  color: #dfb99c;
`;
const Banner = styled.div`
  height: 108px;
  margin: 3px 0 0 2px;
  padding-left: 567px;
  background: #89471c;
`;
const metal = "linear-gradient(90deg, #c55a11, #ed7d31 33%, #bf8f00 67%, #7f6000)";
const LogoFrame = styled.div`
  width: 742px;
  height: 108px;
  padding: 3px;
  border: solid #fff7e0;
  border-width: 1px 1px 0;
  background: ${metal};
`;
const LogoLine = styled.div`
  height: 100%;
  padding: 2px;
  border: 3px solid #e4e4e4;
  border-left-width: 2px;
  background: #1a1410;
`;
const LogoInner = styled.div`
  height: 100%;
  padding: 3px;
  background: ${metal};
`;
const LogoCore = styled.div`
  display: flex;
  justify-content: flex-end;
  height: 100%;
  padding: 14px 7px;
  background: #000;
`;
const Board = styled.div`
  display: flex;
  align-items: flex-start;
`;
const PanelColumn = styled.div`
  flex: none;
  width: ${({ $width }) => $width}px;
  margin: ${({ $top, $left }) => `${$top}px 0 0 ${$left}px`};
`;
const Panel = styled.section`
  height: ${({ $height }) => $height}px;
  margin-top: ${({ $gap }) => $gap || 0}px;
  padding: ${({ $pad, $inset }) => `${$pad || 0}px 14px 0 ${$inset || 16}px`};
  border-radius: ${({ $radius }) => $radius || 11}px;
  background: #492711;
  font-family: ${dialogFont};
  font-size: ${({ $large }) => ($large ? 17 : 16)}px;
  font-weight: 700;
  line-height: 21px;
`;
const PanelTitle = styled.h2`
  margin: 0;
  padding-left: ${({ $start }) => ($start ? 4 : 0)}px;
  font-size: ${({ $small }) => ($small ? 16 : 18)}px;
  font-weight: 700;
  text-align: ${({ $start }) => ($start ? "left" : "center")};
`;
const PanelGap = styled.div`
  height: 21px;
`;
const CostRow = styled.div`
  display: grid;
  grid-template-columns: ${({ $wide }) => ($wide ? "224px 1fr" : "146px 64px 1fr")};
  height: 21px;
  white-space: nowrap;
  span {
    padding-left: 4px;
  }
  span:first-child {
    text-align: ${({ $center }) => ($center ? "center" : "left")};
  }
`;
const WageRow = styled.div`
  display: flex;
  justify-content: space-between;
  width: 208px;
  padding-left: 4px;
`;
const ListPanel = styled.section`
  display: flex;
  flex-direction: column;
  align-items: ${({ $end }) => ($end ? "flex-end" : "stretch")};
  justify-content: ${({ $end }) => ($end ? "flex-end" : "flex-start")};
  height: ${({ $height }) => $height}px;
  padding: ${({ $end }) => ($end ? "0 6px 33px" : "24px 0 33px 9px")};
  border-radius: 55px;
  background: #492711;
`;
const DownButton = styled.button`
  display: flex;
  align-items: center;
  justify-content: center;
  width: 18px;
  height: 20px;
  background: #f0f0f0;
`;
const OverviewButton = styled.button`
  width: 100%;
  height: 50px;
  border-radius: 6px;
  background: #89471c;
  box-shadow: inset 0 0 12px #4a2409;
  color: #d8d8d8;
  font-family: ${dialogFont};
  font-size: 26px;
  font-weight: 700;
`;
const ListTitle = styled.h2`
  margin: 0 0 3px 32px;
  font-family: Lato, sans-serif;
  font-size: 19px;
  font-weight: 700;
  line-height: 24px;
  text-align: center;
`;
const ListBody = styled.div`
  display: flex;
  flex: 1;
`;
const SheetScroll = styled.div`
  display: flex;
  flex-direction: column;
  width: 19px;
  background: #f0f0f0;
  button {
    display: flex;
    align-items: center;
    justify-content: center;
    width: 19px;
    height: 19px;
  }
  button:last-child {
    margin-top: auto;
  }
`;
const SheetThumb = styled.div`
  height: 9px;
  margin: 0 1px;
  background: #cdcdcd;
`;
const MaterialTable = styled.table`
  align-self: flex-start;
  margin: 6px 0 -3px 5px;
  border-collapse: collapse;
  font-family: Lato, sans-serif;
  font-size: 15px;
  font-weight: 700;
  line-height: 21px;
  white-space: nowrap;
  td {
    padding: 0;
  }
  td:first-child {
    width: 256px;
  }
`;
const VerticalScroll = styled.div`
  display: flex;
  flex: none;
  flex-direction: column;
  width: 15px;
  margin: 2px 3px 0;
  background: #f3f3f3;
  button {
    display: flex;
    flex: none;
    align-items: center;
    justify-content: center;
    height: 15px;
    border: 1px solid #ababab;
    background: #fff;
  }
`;
const VerticalThumb = styled.div`
  flex: 1;
  margin: 1px 0 22px;
  border: 1px solid #ababab;
  background: #fff;
`;

const SheetTabs = styled.nav`
  display: flex;
  flex: none;
  align-items: flex-start;
  height: 28px;
  border-top: 1px solid #ababab;
  background: #f6f6f6;
`;
const TabArrows = styled.div`
  display: flex;
  align-items: center;
  justify-content: space-between;
  width: 98px;
  height: 24px;
  padding: 0 41px 0 25px;
`;
const SheetTab = styled.button`
  height: 20px;
  margin-top: 3px;
  padding: 0 15px 0 14px;
  border-right: 1px solid #ababab;
  ${({ $active }) =>
    $active &&
    css`
      height: 25px;
      margin-top: -1px;
      padding: 3px 12px 0;
      border: solid #ababab;
      border-width: 0 1px;
      box-shadow: inset 0 -2px ${green};
      background: #fff;
      color: ${green};
      font-weight: 700;
    `}
`;
const AddSheet = styled.button`
  margin: 5px 0 0 33px;
`;
const HorizontalScroll = styled.div`
  display: flex;
  width: 762px;
  height: 15px;
  margin: 6px 20px 0 auto;
  button {
    display: flex;
    align-items: center;
    justify-content: center;
    width: 15px;
    border: 1px solid #ababab;
    background: #fff;
  }
`;
const HorizontalThumb = styled.div`
  flex: 1;
  border: 1px solid #ababab;
  background: #fff;
`;
const HorizontalTrack = styled.div`
  width: 70px;
  background: #e8e8e8;
`;

const StatusBar = styled.footer`
  display: flex;
  flex: none;
  align-items: center;
  gap: 20px;
  height: 23px;
  padding-left: 5px;
  border-bottom: 1px solid #8a8a8a;
  background: ${green};
  color: #fff;
  font-size: 11px;
`;
const StatusTools = styled.div`
  display: flex;
  align-items: center;
  height: 100%;
  margin-left: auto;
  padding-right: 8px;
`;
const ViewButton = styled.button`
  display: flex;
  align-items: center;
  justify-content: center;
  width: 38px;
  height: 22px;
  background: ${({ $active }) => ($active ? "#0a6332" : "none")};
`;
const ZoomButton = styled.button`
  padding: 0 4px;
`;
const ZoomSlider = styled.input`
  width: 100px;
  height: 12px;
  background: linear-gradient(#fff, #fff) center / 100% 1px no-repeat;
  &::-webkit-slider-thumb {
    width: 4px;
    height: 11px;
    appearance: none;
    background: #fff;
  }
`;
const ZoomValue = styled.span`
  margin-left: 12px;
`;

const Dialog = styled.div`
  position: absolute;
  top: 204px;
  left: 323px;
  width: 846px;
  border: 1px solid #ca5010;
  background: #000;
  box-shadow: 0 4px 14px rgba(0, 0, 0, 0.6);
  color: #fff;
`;
const TitleBar = styled.header`
  display: flex;
  align-items: center;
  justify-content: space-between;
  height: 25px;
  padding: 0 10px 0 3px;
  background: #ca5010;
`;
const CloseButton = styled.button`
  display: flex;
`;
const DialogBody = styled.form`
  display: flex;
  padding: 8px 8px 26px;
  font-family: ${dialogFont};
  font-size: 13px;
  font-weight: 700;
  line-height: 16px;
`;
const DialogColumn = styled.div`
  flex: none;
  width: ${({ $width }) => $width}px;
  margin-left: ${({ $left }) => $left || 0}px;
`;
const Field = styled.div`
  margin: 0;
  padding: 0;
  border: 0;
  & + & {
    margin-top: 20px;
  }
`;
const FieldLabel = styled.label`
  display: block;
  margin-bottom: 8px;
  padding: 0;
`;
const sunken = css`
  border: 2px solid;
  border-color: #808080 #fff #fff #808080;
`;
const ListFrame = styled.div`
  ${sunken}
  display: flex;
  height: ${({ $height }) => $height}px;
`;
const List = styled.select`
  flex: 1;
  min-width: 0;
  height: 100%;
  overflow: hidden;
  color: #804000;
  option {
    height: 16px;
    min-height: 16px;
    padding: 0 0 0 10px;
    font: inherit;
    line-height: 16px;
  }
  option:checked {
    outline: 1px dotted #ff8728;
    outline-offset: -1px;
    background: linear-gradient(#0078d7, #0078d7);
    -webkit-text-fill-color: #fff;
  }
`;
const ClassicScroll = styled.div`
  display: flex;
  flex: none;
  flex-direction: column;
  width: 17px;
  background: #f6f6f6;
`;
const raised = css`
  border: 2px solid;
  border-color: #fff #808080 #808080 #fff;
`;
const ClassicButton = styled.button`
  ${raised}
  display: flex;
  flex: none;
  align-items: center;
  justify-content: center;
  height: 17px;
  background: #f0f0f0;
`;
const ClassicThumb = styled.div`
  ${raised}
  height: ${({ $height }) => $height}px;
  background: #f0f0f0;
`;
const ClassicTrack = styled.div`
  flex: 1;
`;
const TextInput = styled.input`
  ${sunken}
  display: block;
  width: ${({ $width }) => $width}px;
  height: 24px;
  padding: 0 10px;
  color: #804000;
`;
const FormButton = styled.button.attrs({ type: "button" })`
  ${raised}
  display: block;
  width: ${({ $width }) => $width || 184}px;
  height: 40px;
  margin: ${({ $top, $left }) => `${$top}px 0 0 ${$left || 0}px`};
  background: #804000;
`;
const InputPair = styled.div`
  display: flex;
  gap: 40px;
  margin: 40px 0 0 16px;
  ${Field} {
    width: 96px;
    margin-top: 0;
    white-space: nowrap;
  }
`;
const Checks = styled.div`
  display: flex;
  height: 16px;
  margin-top: 4px;
`;
const CheckLabel = styled.label`
  display: flex;
  align-items: center;
  gap: 4px;
  width: 40px;
  padding-left: 1px;
`;
const Check = styled.input`
  flex: none;
  width: 13px;
  height: 13px;
  border: 2px solid;
  border-color: #808080 #e0e0e0 #e0e0e0 #808080;
  background: #fff;
`;

export default App;
